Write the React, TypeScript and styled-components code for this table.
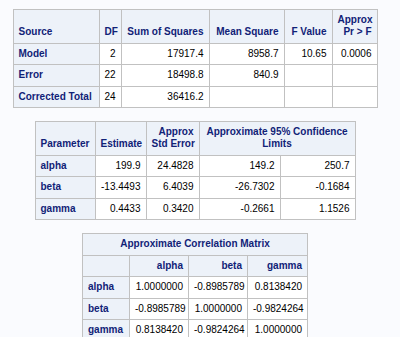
import React from 'react'
import styled, { createGlobalStyle } from 'styled-components'

const GlobalStyle = createGlobalStyle`
  html, body {
    margin: 0;
    padding: 0;
    background: #fafbfe;
  }
`

const Page = styled.div`
  width: 390px;
  padding-top: 9px;
  display: flex;
  flex-direction: column;
  align-items: center;
  gap: 13px;
  font-family: "Liberation Sans", Arial, sans-serif;
  font-size: 10px;
  line-height: 12px;
`

const Table = styled.table<{ $w: number }>`
  width: ${p => p.$w}px;
  table-layout: fixed;
  border-collapse: collapse;
  border: 1px solid #c1c1c1;
  background: #fff;
`

const Col = styled.col<{ $w: number }>`
  width: ${p => p.$w}px;
`

const Head = styled.th<{ $align?: string }>`
  background: #edf2f9;
  color: #112277;
  font-weight: bold;
  text-align: ${p => p.$align || 'right'};
  vertical-align: bottom;
  padding: 4px 5px 4.5px;
  border: 1px solid #c1c1c1;
  white-space: nowrap;
`

const RowHead = styled.th`
  background: #edf2f9;
  color: #112277;
  font-weight: bold;
  text-align: left;
  padding: 4px 5px 4.5px;
  border: 1px solid #c1c1c1;
  white-space: nowrap;
`

const Cell = styled.td`
  color: #000;
  text-align: right;
  padding: 4px 5px 4.5px;
  border: 1px solid #c1c1c1;
  white-space: nowrap;
`

const anova = [
  ['Model', '2', '17917.4', '8958.7', '10.65', '0.0006'],
  ['Error', '22', '18498.8', '840.9', '', ''],
  ['Corrected Total', '24', '36416.2', '', '', ''],
]

const params = [
  ['alpha', '199.9', '24.4828', '149.2', '250.7'],
  ['beta', '-13.4493', '6.4039', '-26.7302', '-0.1684'],
  ['gamma', '0.4433', '0.3420', '-0.2661', '1.1526'],
]

const corr = [
  ['alpha', '1.0000000', '-0.8985789', '0.8138420'],
  ['beta', '-0.8985789', '1.0000000', '-0.9824264'],
  ['gamma', '0.8138420', '-0.9824264', '1.0000000'],
]

const DataRow = ({ row }: { row: string[] }) => (
  <tr>
    <RowHead>{row[0]}</RowHead>
    {row.slice(1).map((v, i) => (
      <Cell key={i}>{v}</Cell>
    ))}
  </tr>
)

const App = () => (
  <>
    <GlobalStyle />
    <Page>
      <Table $w={364}>
        <colgroup>
          {[86, 22, 88, 75, 48, 45].map((w, i) => <Col key={i} $w={w} />)}
        </colgroup>
        <thead>
          <tr>
            <Head $align="left">Source</Head>
            <Head>DF</Head>
            <Head>Sum of Squares</Head>
            <Head>Mean Square</Head>
            <Head>F Value</Head>
            <Head>Approx<br />Pr &gt; F</Head>
          </tr>
        </thead>
        <tbody>
          {anova.map(r => <DataRow key={r[0]} row={r} />)}
        </tbody>
      </Table>

      <Table $w={320}>
        <colgroup>
          {[60, 51, 53, 81, 75].map((w, i) => <Col key={i} $w={w} />)}
        </colgroup>
        <thead>
          <tr>
            <Head $align="left">Parameter</Head>
            <Head>Estimate</Head>
            <Head>Approx<br />Std Error</Head>
            <Head colSpan={2} $align="center">Approximate 95% Confidence<br />Limits</Head>
          </tr>
        </thead>
        <tbody>
          {params.map(r => <DataRow key={r[0]} row={r} />)}
        </tbody>
      </Table>

      <Table $w={225}>
        <colgroup>
          {[47, 59, 59, 60].map((w, i) => <Col key={i} $w={w} />)}
        </colgroup>
        <thead>
          <tr>
            <Head colSpan={4} $align="center">Approximate Correlation Matrix</Head>
          </tr>
          <tr>
            <Head />
            <Head>alpha</Head>
            <Head>beta</Head>
            <Head>gamma</Head>
          </tr>
        </thead>
        <tbody>
          {corr.map(r => <DataRow key={r[0]} row={r} />)}
        </tbody>
      </Table>
    </Page>
  </>
)

export default App
